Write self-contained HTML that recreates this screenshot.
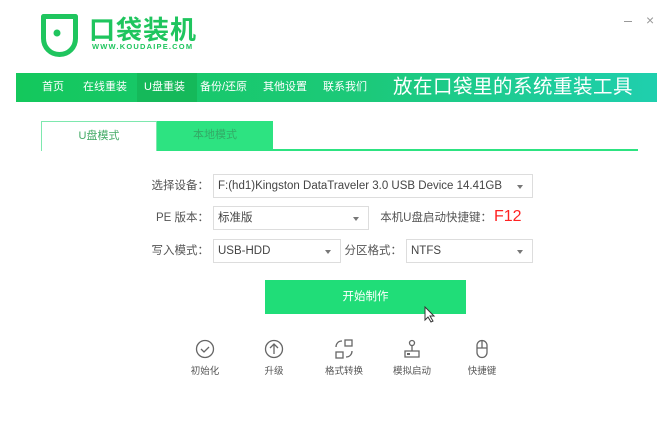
<!DOCTYPE html>
<html><head><meta charset="utf-8"><style>
*{margin:0;padding:0;box-sizing:border-box}
body{width:668px;height:423px;background:#fff;position:relative;overflow:hidden;font-family:"Liberation Sans","Noto Sans CJK SC",sans-serif;color:#555}
.a{position:absolute}
.nav{left:16px;top:73px;width:641px;height:29px;background:linear-gradient(90deg,#14c85c 0%,#1cc97a 55%,#1fcfae 100%)}
.nav span{position:absolute;top:0;line-height:29px;font-size:11px;color:#fff}
.sel{position:absolute;height:24px;border:1px solid #ddd;background:#fff;font-size:11.5px;line-height:22px;padding-left:4px;color:#444;white-space:nowrap}
.sel:after{content:"";position:absolute;right:9px;top:10px;border:3.5px solid transparent;border-top:4px solid #777}
.lbl{position:absolute;font-size:11.5px;color:#555;line-height:24px;text-align:right;white-space:nowrap}
.ic{position:absolute;top:339px;width:60px;text-align:center;font-size:9.5px;color:#555}
.ic svg{display:block;margin:0 auto 4px}
</style></head><body>
<svg class="a" style="left:40px;top:13px" width="40" height="46" viewBox="0 0 40 46"><path d="M3.5 3.5h32v22c0 9-7 16-16 16S3.5 34.5 3.5 25.5z" fill="none" stroke="#1fc55e" stroke-width="5" stroke-linejoin="round"/><circle cx="17" cy="20" r="3.5" fill="#1fc55e"/></svg>
<div class="a" style="left:89px;top:10px;font-size:26px;font-weight:bold;color:#1fc55e;letter-spacing:1px">口袋装机</div>
<div class="a" style="left:92px;top:42px;font-size:7.5px;font-weight:bold;color:#1fc55e;letter-spacing:1.2px">WWW.KOUDAIPE.COM</div>
<div class="a" style="left:624px;top:21px;width:8px;height:1px;background:#999"></div>
<div class="a" style="left:646px;top:12px;font-size:14px;color:#999">×</div>
<div class="a nav">
<div class="a" style="left:121px;top:0;width:60px;height:29px;background:#15b95a"></div>
<span style="left:26px">首页</span><span style="left:67px">在线重装</span><span style="left:128px">U盘重装</span><span style="left:184px">备份/还原</span><span style="left:247px">其他设置</span><span style="left:307px">联系我们</span>
<span style="left:377px;font-size:19.5px;letter-spacing:0.5px">放在口袋里的系统重装工具</span>
</div>
<div class="a" style="left:41px;top:121px;width:116px;height:30px;border:1px solid #7ee8ae;border-bottom:none;background:#fff;font-size:11px;text-align:center;line-height:28px;color:#4a6">U盘模式</div>
<div class="a" style="left:157px;top:121px;width:116px;height:29px;background:#2de381;font-size:11px;text-align:center;line-height:29px;color:#3a6">本地模式</div>
<div class="a" style="left:157px;top:149px;width:481px;height:2px;background:#2de381"></div>
<div class="lbl" style="right:459px;top:174px">选择设备：</div>
<div class="sel" style="left:213px;top:174px;width:320px">F:(hd1)Kingston DataTraveler 3.0 USB Device 14.41GB</div>
<div class="lbl" style="right:459px;top:206px">PE 版本：</div>
<div class="sel" style="left:213px;top:206px;width:156px">标准版</div>
<div class="lbl" style="right:176px;top:206px">本机U盘启动快捷键：</div>
<div class="a" style="left:494px;top:208px;font-size:16px;color:#f22">F12</div>
<div class="lbl" style="right:459px;top:239px">写入模式：</div>
<div class="sel" style="left:213px;top:239px;width:128px">USB-HDD</div>
<div class="lbl" style="right:266px;top:239px">分区格式：</div>
<div class="sel" style="left:406px;top:239px;width:127px">NTFS</div>
<div class="a" style="left:265px;top:280px;width:201px;height:34px;background:#20dd78;color:#fff;font-size:11.5px;text-align:center;line-height:34px">开始制作</div>
<svg class="a" style="left:424px;top:306px" width="12" height="17" viewBox="0 0 12 17"><path d="M1 1v13l3-3 3 5 2-1-3-5h4z" fill="#fff" stroke="#333"/></svg>
<div class="ic" style="left:175px"><svg width="20" height="20"><circle cx="10" cy="10" r="8.5" fill="none" stroke="#666" stroke-width="1.3"/><path d="M6 10l3 3 5-5" fill="none" stroke="#666" stroke-width="1.3"/></svg>初始化</div>
<div class="ic" style="left:244px"><svg width="20" height="20"><circle cx="10" cy="10" r="8.5" fill="none" stroke="#666" stroke-width="1.3"/><path d="M10 15V5M6 9l4-4 4 4" fill="none" stroke="#666" stroke-width="1.3"/></svg>升级</div>
<div class="ic" style="left:314px"><svg width="20" height="20"><rect x="11" y="1" width="7" height="6" fill="none" stroke="#666" stroke-width="1.3"/><rect x="2" y="13" width="7" height="6" fill="none" stroke="#666" stroke-width="1.3"/><path d="M2 8c0-3 2-6 6-6M18 12c0 3-2 6-6 6" fill="none" stroke="#666" stroke-width="1.3"/></svg>格式转换</div>
<div class="ic" style="left:382px"><svg width="20" height="20"><circle cx="10" cy="4" r="2.5" fill="none" stroke="#666" stroke-width="1.3"/><path d="M10 7v5M3 12h14v6H3z" fill="none" stroke="#666" stroke-width="1.3"/><rect x="5" y="14" width="3" height="2" fill="#666"/></svg>模拟启动</div>
<div class="ic" style="left:452px"><svg width="20" height="20"><rect x="5" y="1.5" width="10" height="17" rx="5" fill="none" stroke="#666" stroke-width="1.3"/><path d="M5 9h10M10 1.5v7.5" stroke="#666" stroke-width="1.3"/></svg>快捷键</div>
</body></html>
